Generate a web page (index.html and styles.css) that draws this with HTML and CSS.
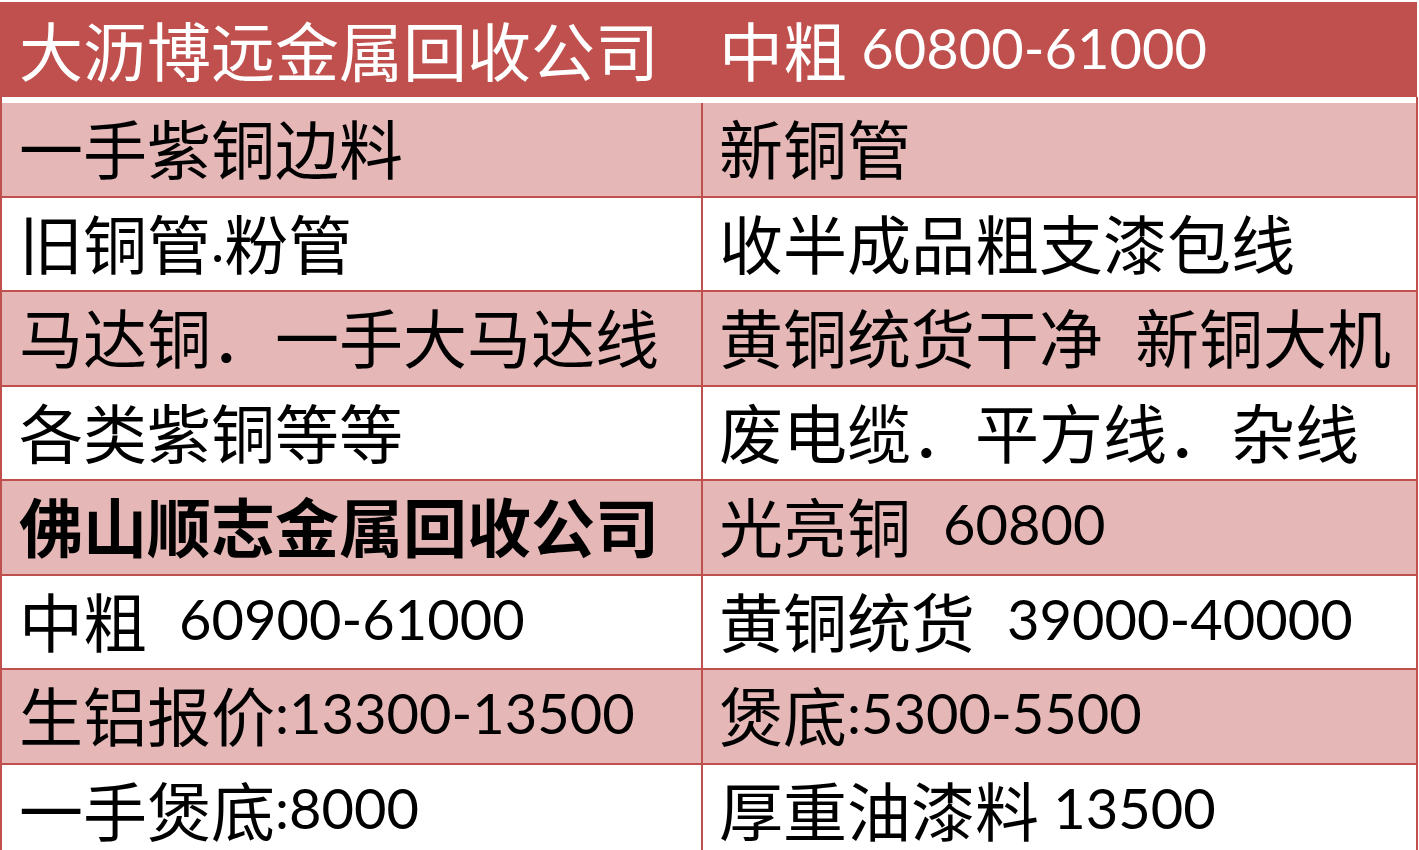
FILE: index.html
```html
<!DOCTYPE html>
<html lang="zh-CN">
<head>
<meta charset="utf-8">
<title>报价表</title>
<link rel="stylesheet" href="styles.css">
</head>
<body>
<div class="sheet">
  <div class="head">
    <div class="hc">大沥博远金属回收公司</div>
    <div class="hc hc2">中粗<span class="n"> 60800-61000</span></div>
  </div>
  <div class="body">
    <div class="grid">
      <div class="c c1 pink">一手紫铜边料</div>
      <div class="c c2 pink">新铜管</div>

      <div class="c c1">旧铜管<span class="n">.</span>粉管</div>
      <div class="c c2">收半成品粗支漆包线</div>

      <div class="c c1 pink">马达铜．一手大马达线</div>
      <div class="c c2 pink">黄铜统货干净&ensp;新铜大机</div>

      <div class="c c1">各类紫铜等等</div>
      <div class="c c2">废电缆．平方线．杂线</div>

      <div class="c c1 pink bold">佛山顺志金属回收公司</div>
      <div class="c c2 pink">光亮铜&ensp;<span class="n">60800</span></div>

      <div class="c c1">中粗&ensp;<span class="n">60900-61000</span></div>
      <div class="c c2">黄铜统货&ensp;<span class="n">39000-40000</span></div>

      <div class="c c1 pink">生铝报价<span class="n">:13300-13500</span></div>
      <div class="c c2 pink">煲底<span class="n">:5300-5500</span></div>

      <div class="c c1">一手煲底<span class="n">:8000</span></div>
      <div class="c c2">厚重油漆料<span class="n"> 13500</span></div>
    </div>
  </div>
</div>
</body>
</html>
```
FILE: styles.css
```css
html, body {
  margin: 0;
  padding: 0;
  height: 850px;
  overflow: hidden;
  background: #ffffff;
}

.sheet {
  padding-top: 2px;
  width: 1418px;
  font-family: "Noto Sans CJK SC", "Noto Sans CJK TC", sans-serif;
  font-size: 64px;
  color: #000000;
}

.head {
  display: grid;
  grid-template-columns: 703px 1fr;
  width: 1417px;
  height: 95px;
  background: #c0504d;
  color: #ffffff;
}

.hc {
  display: flex;
  align-items: center;
  padding-left: 19px;
  padding-bottom: 4px;
  box-sizing: border-box;
  white-space: pre;
  line-height: 76px;
}

.hc2 {
  padding-left: 16px;
}

.body {
  border-left: 2px solid #c0504d;
  border-right: 2px solid #c0504d;
  padding-top: 6px;
  background: #ffffff;
}

.grid {
  display: grid;
  grid-template-columns: 699px 713px;
  grid-auto-rows: 92.5px;
  column-gap: 2px;
  row-gap: 2px;
  background: #c0504d;
}

.c {
  display: flex;
  align-items: center;
  background: #ffffff;
  white-space: pre;
  line-height: 76px;
  padding-bottom: 6px;
  box-sizing: border-box;
}

.c1 {
  padding-left: 17px;
}

.c2 {
  padding-left: 16px;
}

.pink {
  background: #e5b8b7;
}

.bold {
  font-weight: 700;
}

.n {
  font-family: "Lato", "Open Sans", sans-serif;
  font-size: 56px;
  font-weight: 400;
}
```
